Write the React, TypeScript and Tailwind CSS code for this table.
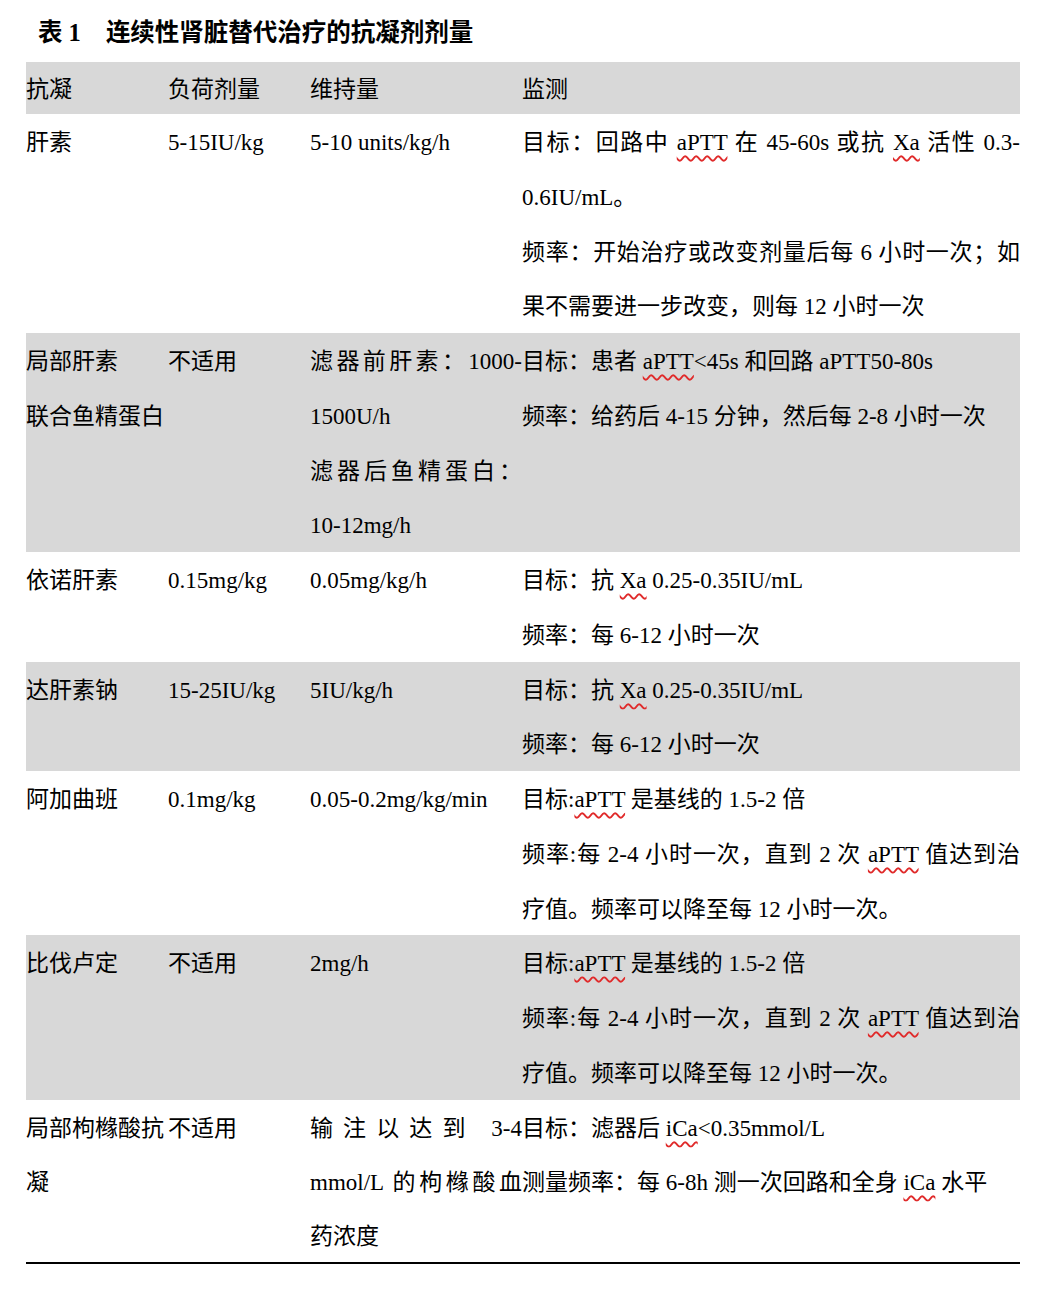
import type { ReactNode } from "react";

type Line = { t: ReactNode; j?: boolean };

type Row = {
  name: Line[];
  load: Line[];
  keep: Line[];
  watch: Line[];
  gray?: boolean;
  last?: boolean;
};

// Word 拼写检查的红色波浪线
function W({ children }: { children: ReactNode }) {
  return (
    <span className="underline decoration-wavy decoration-[#e02a2a] decoration-[1.5px] underline-offset-[5px]">
      {children}
    </span>
  );
}

const L = (t: ReactNode, j = false): Line => ({ t, j });

const ARGATROBAN_WATCH: Line[] = [
  L(<>目标:<W>aPTT</W> 是基线的 1.5-2 倍</>),
  L(<>频率:每 2-4 小时一次，直到 2 次 <W>aPTT</W> 值达到治</>, true),
  L("疗值。频率可以降至每 12 小时一次。"),
];

const XA_WATCH: Line[] = [
  L(<>目标：抗 <W>Xa</W> 0.25-0.35IU/mL</>),
  L("频率：每 6-12 小时一次"),
];

const ROWS: Row[] = [
  {
    name: [L("肝素")],
    load: [L("5-15IU/kg")],
    keep: [L("5-10 units/kg/h")],
    watch: [
      L(<>目标：回路中 <W>aPTT</W> 在 45-60s 或抗 <W>Xa</W> 活性 0.3-</>, true),
      L("0.6IU/mL。"),
      L("频率：开始治疗或改变剂量后每 6 小时一次；如", true),
      L("果不需要进一步改变，则每 12 小时一次"),
    ],
  },
  {
    name: [L("局部肝素"), L("联合鱼精蛋白")],
    load: [L("不适用")],
    keep: [L("滤器前肝素：1000-", true), L("1500U/h"), L("滤器后鱼精蛋白：", true), L("10-12mg/h")],
    watch: [
      L(<>目标：患者 <W>aPTT</W>&lt;45s 和回路 aPTT50-80s</>),
      L("频率：给药后 4-15 分钟，然后每 2-8 小时一次"),
    ],
    gray: true,
  },
  {
    name: [L("依诺肝素")],
    load: [L("0.15mg/kg")],
    keep: [L("0.05mg/kg/h")],
    watch: XA_WATCH,
  },
  {
    name: [L("达肝素钠")],
    load: [L("15-25IU/kg")],
    keep: [L("5IU/kg/h")],
    watch: XA_WATCH,
    gray: true,
  },
  {
    name: [L("阿加曲班")],
    load: [L("0.1mg/kg")],
    keep: [L("0.05-0.2mg/kg/min")],
    watch: ARGATROBAN_WATCH,
  },
  {
    name: [L("比伐卢定")],
    load: [L("不适用")],
    keep: [L("2mg/h")],
    watch: ARGATROBAN_WATCH,
    gray: true,
  },
  {
    name: [L("局部枸橼酸抗"), L("凝")],
    load: [L("不适用")],
    keep: [L("输注以达到  3-4", true), L("mmol/L 的枸橼酸血", true), L("药浓度")],
    watch: [
      L(<>目标：滤器后 <W>iCa</W>&lt;0.35mmol/L</>),
      L(<>测量频率：每 6-8h 测一次回路和全身 <W>iCa</W> 水平</>),
    ],
    last: true,
  },
];

function Cell({ lines }: { lines: Line[] }) {
  return (
    <div className="translate-y-[2px]">
      {lines.map((l, i) => (
        <div
          key={i}
          className={l.j ? "text-justify [text-align-last:justify]" : "whitespace-nowrap"}
        >
          {l.t}
        </div>
      ))}
    </div>
  );
}

export default function App() {
  return (
    <div className="h-[1304px] w-[1044px] bg-white text-[23px] text-black font-['Liberation_Serif','Noto_Sans_CJK_SC',serif]">
      <div className="h-[62px] pl-[38px] pt-[19px]">
        <h1 className="flex gap-[25px] text-[24.5px] font-bold leading-[28px]">
          <span>表 1</span>
          <span>连续性肾脏替代治疗的抗凝剂剂量</span>
        </h1>
      </div>

      <div className="ml-[26px] w-[994px]">
        <div className="grid h-[52px] grid-cols-[142px_142px_212px_498px] bg-[#d8d8d8] leading-[52px]">
          <div className="translate-y-[2px]">抗凝</div>
          <div className="translate-y-[2px]">负荷剂量</div>
          <div className="translate-y-[2px]">维持量</div>
          <div className="translate-y-[2px]">监测</div>
        </div>

        {ROWS.map((r, i) => (
          <div
            key={i}
            className={`grid grid-cols-[142px_142px_212px_498px] ${
              r.gray ? "bg-[#d8d8d8]" : "bg-white"
            } ${r.last ? "border-b-2 border-black leading-[54px]" : "leading-[54.75px]"}`}
          >
            <Cell lines={r.name} />
            <Cell lines={r.load} />
            <Cell lines={r.keep} />
            <Cell lines={r.watch} />
          </div>
        ))}
      </div>
    </div>
  );
}
